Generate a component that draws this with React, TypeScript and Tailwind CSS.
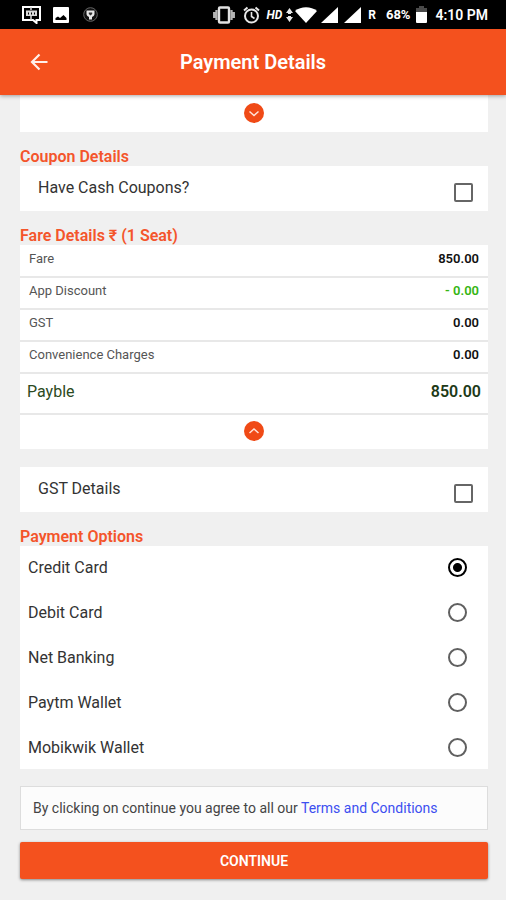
import { useState } from "react";

const fares = [
  { label: "Fare", amount: "850.00", color: "text-[#111111]" },
  { label: "App Discount", amount: "- 0.00", color: "text-[#35b512]" },
  { label: "GST", amount: "0.00", color: "text-[#111111]" },
  { label: "Convenience Charges", amount: "0.00", color: "text-[#111111]" },
];

const options = [
  "Credit Card",
  "Debit Card",
  "Net Banking",
  "Paytm Wallet",
  "Mobikwik Wallet",
];

function SignalIcon() {
  return (
    <svg className="w-[17px] h-4" viewBox="0 0 17 16" fill="#ffffff">
      <path d="M17 0v16H0z" />
    </svg>
  );
}

function StatusBar() {
  return (
    <div className="flex items-center justify-between h-[29px] bg-black text-white pl-[22px] pr-[18px]">
      <div className="flex items-center gap-3">
        <svg className="w-[19px] h-[18px]" viewBox="0 0 19 18">
          <path
            d="M1 1h17v13h-3.500v3L11 14H1z"
            fill="none"
            stroke="#ffffff"
            strokeWidth="2"
          />
          <path d="M4 4.500h11v5.500H4z" fill="#d8d8d8" />
          <path d="M9 1v3M9 10v4" stroke="#d8d8d8" strokeWidth="1.500" />
          <path d="M6 6.500h1v2H6zM9 6.500h1v2H9zM12 6.500h1v2h-1z" fill="#000000" />
        </svg>
        <svg className="w-4 h-4" viewBox="0 0 16 16">
          <rect width="16" height="16" rx="1" fill="#ffffff" />
          <path d="M2.500 13v-2l2.500-1.500 2 1.500 3.500-3 3 3v2z" fill="#000000" />
        </svg>
        <svg className="w-[15px] h-[15px] ml-0.5" viewBox="0 0 15 15">
          <circle
            cx="7.5"
            cy="7.5"
            r="6.8"
            fill="#111111"
            stroke="#666666"
            strokeWidth="1"
          />
          <path
            d="M3.500 3.500h8v3.500c0 1.500-1.500 2.500-2.500 3v2.500H6V10C5 9.500 3.500 8.500 3.500 7z"
            fill="#e8e8e8"
          />
          <path d="M5.800 5.500h3.400v1.500L7.500 8.500 5.800 7z" fill="#333333" />
        </svg>
      </div>
      <div className="flex items-center">
        <svg className="w-[22px] h-[18px] mr-2" viewBox="0 0 22 18">
          <path
            d="M1.200 6v6M3.500 4v10M20.800 6v6M18.500 4v10"
            stroke="#b4b4b4"
            strokeWidth="2.300"
          />
          <rect
            x="6"
            y="1.500"
            width="10"
            height="15"
            rx="1"
            fill="#000000"
            stroke="#e2e2e2"
            strokeWidth="2.400"
          />
        </svg>
        <svg
          className="w-[17px] h-[18px] mr-1.5"
          viewBox="0 0 17 18"
          fill="none"
          stroke="#e8e8e8"
          strokeWidth="2"
        >
          <circle cx="8.500" cy="10" r="6.500" />
          <path d="M8.500 6v4.500l3 2" strokeWidth="1.600" />
          <path d="M1 4.500l3.500-3M16 4.500l-3.500-3" />
        </svg>
        <span className="text-xs font-bold italic mr-1">HD</span>
        <svg className="w-[7px] h-[14px] mr-0.5" viewBox="0 0 7 14" fill="#e8e8e8">
          <path d="M3.500 0L7 5H5v1H2V5H0zM3.500 14L0 9h2V8h3v1h2z" />
        </svg>
        <svg className="w-[22px] h-4 mr-1" viewBox="0 0 22 16" fill="#ffffff">
          <path d="M0 4C6-1 16-1 22 4L11 16z" />
        </svg>
        <SignalIcon />
        <span className="w-1.5" />
        <SignalIcon />
        <span className="text-xs font-bold ml-[7px]">R</span>
        <span className="text-[13px] font-bold ml-2.5 mr-1.5">68%</span>
        <svg className="w-[11px] h-[17px] mr-2" viewBox="0 0 11 17">
          <path d="M3 0h5v2h3v4H0V2h3z" fill="#4a4a4a" />
          <path d="M0 6h11v10a1 1 0 0 1-1 1H1a1 1 0 0 1-1-1z" fill="#ffffff" />
        </svg>
        <span className="text-sm font-semibold">4:10 PM</span>
      </div>
    </div>
  );
}

function ToggleButton({ label, up }: { label: string; up?: boolean }) {
  return (
    <button
      aria-label={label}
      className="flex items-center justify-center w-5 h-5 rounded-full bg-[#f04a16] cursor-pointer"
    >
      <svg
        className="w-5 h-5"
        viewBox="0 0 20 20"
        fill="none"
        stroke="#ffe3d9"
        strokeWidth="1.500"
      >
        <path d={up ? "M5.500 12l4.500-4 4.500 4" : "M5.500 8.500l4.500 4 4.500-4"} />
      </svg>
    </button>
  );
}

function SectionTitle({ children }: { children: string }) {
  return (
    <h2 className="pt-[15px] text-base leading-5 font-semibold text-[#f4552b] -mb-px">
      {children}
    </h2>
  );
}

function CheckCard({ label }: { label: string }) {
  return (
    <label className="flex justify-between h-[45px] bg-white pl-[18px] pr-[15px] cursor-pointer">
      <span className="pt-3 text-base leading-5 text-[#333333]">{label}</span>
      <input
        type="checkbox"
        className="appearance-none self-end mb-[9px] w-[19px] h-[19px] border-2 border-[#666666] rounded-xs checked:bg-[#f4511e]"
      />
    </label>
  );
}

export default function App() {
  const [selected, setSelected] = useState("Credit Card");

  return (
    <div className="min-h-screen bg-[#f0f0f0] font-[Roboto,sans-serif]">
      <StatusBar />
      <header className="relative grid grid-cols-[1fr_auto_1fr] items-center h-[66px] bg-[#f4511e] px-7 text-white shadow-[0_1px_4px_rgba(0,0,0,0.35)]">
        <button aria-label="Back" className="w-6 h-6 cursor-pointer">
          <svg
            className="w-[22px] h-6"
            viewBox="0 0 22 24"
            fill="none"
            stroke="#fff0ea"
            strokeWidth="2.200"
          >
            <path d="M19.500 12H4M11.500 4.500L4 12l7.500 7.500" />
          </svg>
        </button>
        <h1 className="text-xl font-semibold">Payment Details</h1>
      </header>

      <main className="pl-5 pr-[18px] pb-[21px]">
        <div className="flex justify-center bg-white pt-2 pb-[9px]">
          <ToggleButton label="Show trip details" />
        </div>

        <SectionTitle>Coupon Details</SectionTitle>
        <CheckCard label="Have Cash Coupons?" />

        <SectionTitle>Fare Details ₹ (1 Seat)</SectionTitle>
        <div className="bg-white">
          <table className="w-full border-collapse">
            <tbody>
              {fares.map((fare) => (
                <tr key={fare.label} className="h-8 border-b-2 border-[#e8e8e8]">
                  <th className="pl-[9px] pb-1 text-left text-[13px] leading-5 font-normal text-[#555555]">
                    {fare.label}
                  </th>
                  <td
                    className={`pr-[9px] pb-1 text-right text-[13px] leading-5 font-semibold ${fare.color}`}
                  >
                    {fare.amount}
                  </td>
                </tr>
              ))}
              <tr className="h-[41px] border-b-2 border-[#e8e8e8]">
                <th className="pl-[7px] pb-1 text-left text-base leading-5 font-normal text-[#2c4a22]">
                  Payble
                </th>
                <td className="pr-[7px] pb-1 text-right text-base leading-5 font-semibold text-[#1d3a17]">
                  850.00
                </td>
              </tr>
            </tbody>
          </table>
          <div className="flex justify-center pt-1.5 pb-2">
            <ToggleButton label="Hide fare details" up />
          </div>
        </div>

        <div className="mt-[18px]">
          <CheckCard label="GST Details" />
        </div>

        <SectionTitle>Payment Options</SectionTitle>
        <div className="flex flex-col gap-0.5 bg-white">
          {options.map((option) => (
            <label
              key={option}
              className="flex items-center justify-between h-[43px] pl-2 pr-[21px] cursor-pointer"
            >
              <span className="text-base leading-5 text-[#333333]">{option}</span>
              <input
                type="radio"
                name="payment"
                checked={selected === option}
                onChange={() => setSelected(option)}
                className="appearance-none w-[19px] h-[19px] rounded-full border-2 border-[#606060] checked:border-black checked:bg-[radial-gradient(circle,#000000_4px,transparent_5px)]"
              />
            </label>
          ))}
        </div>

        <p className="mt-[17px] border border-[#dddddd] bg-[#fcfcfc] px-3 py-[11px] text-sm leading-5 text-[#444444]">
          By clicking on continue you agree to all our{" "}
          <a href="#terms" className="text-[#3d4ff0]">
            Terms and Conditions
          </a>
        </p>

        <button className="mt-3 w-full h-[37px] rounded-xs bg-[#f4511e] text-sm font-semibold text-white shadow-[0_1px_3px_rgba(0,0,0,0.45)] cursor-pointer">
          CONTINUE
        </button>
      </main>
    </div>
  );
}
